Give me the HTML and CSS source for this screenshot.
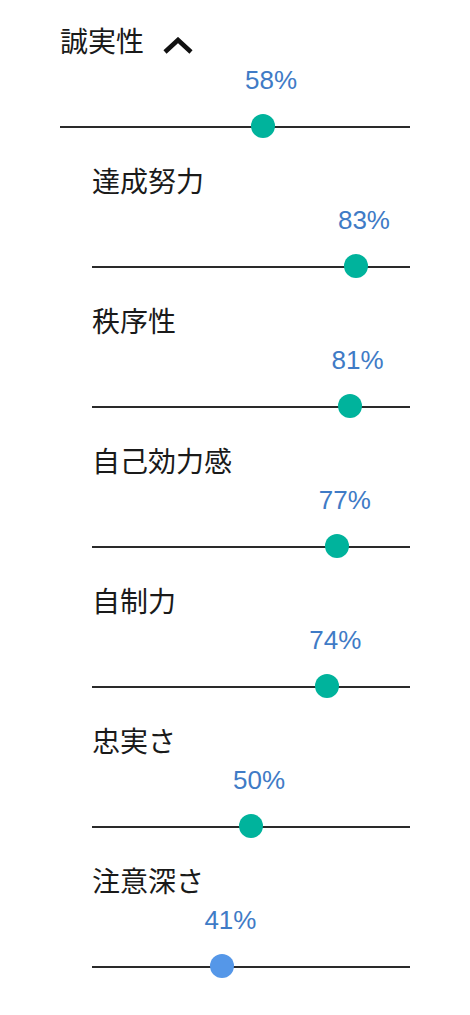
FILE: index.html
```html
<!DOCTYPE html>
<html lang="ja">
<head>
<meta charset="utf-8">
<link rel="stylesheet" href="styles.css">
</head>
<body>
<div class="panel">
  <section class="trait">
    <div class="trait-head">
      <span class="trait-title">誠実性</span>
      <svg class="chev" viewBox="0 0 32 18" width="32" height="18"><path d="M3 15 L16 3 L29 15" fill="none" stroke="#111" stroke-width="4.6"/></svg>
    </div>
    <div class="meter">
      <div class="pct-row"><span class="pct" style="left:58%">58%</span></div>
      <div class="track"><span class="knob" style="left:58%"></span></div>
    </div>
  </section>

  <section class="facet">
    <div class="facet-title">達成努力</div>
    <div class="meter">
      <div class="pct-row"><span class="pct" style="left:83%">83%</span></div>
      <div class="track"><span class="knob" style="left:83%"></span></div>
    </div>
  </section>

  <section class="facet">
    <div class="facet-title">秩序性</div>
    <div class="meter">
      <div class="pct-row"><span class="pct" style="left:81%">81%</span></div>
      <div class="track"><span class="knob" style="left:81%"></span></div>
    </div>
  </section>

  <section class="facet">
    <div class="facet-title">自己効力感</div>
    <div class="meter">
      <div class="pct-row"><span class="pct" style="left:77%">77%</span></div>
      <div class="track"><span class="knob" style="left:77%"></span></div>
    </div>
  </section>

  <section class="facet">
    <div class="facet-title">自制力</div>
    <div class="meter">
      <div class="pct-row"><span class="pct" style="left:74%">74%</span></div>
      <div class="track"><span class="knob" style="left:74%"></span></div>
    </div>
  </section>

  <section class="facet">
    <div class="facet-title">忠実さ</div>
    <div class="meter">
      <div class="pct-row"><span class="pct" style="left:50%">50%</span></div>
      <div class="track"><span class="knob" style="left:50%"></span></div>
    </div>
  </section>

  <section class="facet">
    <div class="facet-title">注意深さ</div>
    <div class="meter">
      <div class="pct-row"><span class="pct" style="left:41%">41%</span></div>
      <div class="track"><span class="knob knob-low" style="left:41%"></span></div>
    </div>
  </section>
</div>
</body>
</html>
```

FILE: styles.css
```css
html, body {
  margin: 0;
  padding: 0;
  background: #ffffff;
}

body {
  font-family: "Noto Sans CJK JP", "Liberation Sans", sans-serif;
  color: #1a1a1a;
}

.panel {
  width: 350px;
  padding: 20px 0 0 60px;
  display: flex;
  flex-direction: column;
}

.trait-head {
  display: flex;
  align-items: flex-start;
  height: 40px;
  gap: 18px;
}

.trait-title,
.facet-title {
  font-size: 28px;
  line-height: 40px;
  height: 40px;
}

.chev {
  display: block;
  margin-top: 17px;
}

.facet {
  padding-left: 32px;
}

.meter {
  padding-top: 6px;
  display: flex;
  flex-direction: column;
}

.pct-row {
  position: relative;
  height: 30px;
}

.pct {
  position: absolute;
  top: -1px;
  margin-left: -18px;
  font-family: "Liberation Sans", Arial, sans-serif;
  font-size: 26px;
  line-height: 30px;
  color: #3f7bc6;
  white-space: nowrap;
}

.track {
  position: relative;
  height: 2px;
  margin-top: 30px;
  margin-bottom: 32px;
  background: #2a2a2a;
}

.knob {
  position: absolute;
  top: 50%;
  width: 24px;
  height: 24px;
  margin-left: -12px;
  margin-top: -13px;
  border-radius: 50%;
  background: #00b39c;
}

.knob-low {
  background: #5597e8;
}
```
